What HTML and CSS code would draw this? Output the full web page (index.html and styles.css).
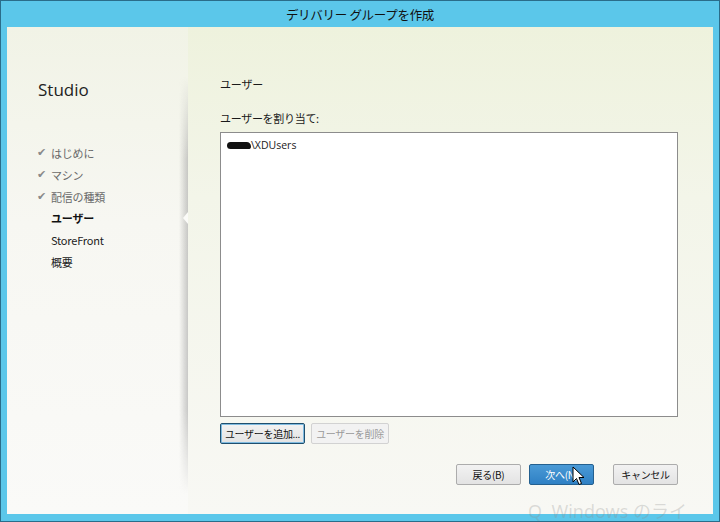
FILE: index.html
```html
<!DOCTYPE html>
<html lang="ja">
<head>
    <meta charset="UTF-8">
    <title>デリバリー グループを作成</title>
    <link rel="stylesheet" href="styles.css">
</head>
<body>

    <div class="window">
        <!-- Title bar -->
        <div class="title-bar">デリバリー グループを作成</div>

        <div class="content">
            <!-- Left steps -->
            <div class="sidebar">
                <div class="brand">Studio</div>
                <ul class="steps">
                    <li class="step done"><span class="check">✔</span>はじめに</li>
                    <li class="step done"><span class="check">✔</span>マシン</li>
                    <li class="step done"><span class="check">✔</span>配信の種類</li>
                    <li class="step active">ユーザー</li>
                    <li class="step">StoreFront</li>
                    <li class="step">概要</li>
                </ul>
                <div class="notch"></div>
            </div>

            <!-- Page -->
            <div class="main">
                <div class="heading">ユーザー</div>
                <div class="label">ユーザーを割り当て:</div>
                <div class="user-list">
                    <div class="user-row"><span class="blot"></span>\XDUsers</div>
                </div>
                <div class="list-buttons">
                    <button class="btn btn-add focused">ユーザーを追加...</button>
                    <button class="btn btn-remove" disabled>ユーザーを削除</button>
                </div>
                <div class="footer">
                    <button class="btn nav-btn">戻る(B)</button>
                    <button class="btn nav-btn primary">次へ(N)</button>
                    <button class="btn nav-btn cancel">キャンセル</button>
                </div>
            </div>
        </div>
    </div>

    <!-- mouse pointer over the Next button -->
    <svg class="cursor" width="13" height="20" viewBox="0 0 13 20">
        <path d="M1 1 L1 16 L4.5 12.5 L7 18.5 L9.5 17.5 L7 11.5 L12 11.5 Z" fill="#fff" stroke="#000" stroke-width="1"/>
    </svg>

    <!-- faded watermark at the bottom -->
    <div class="watermark">Q&nbsp;&nbsp;Windows のライ</div>

</body>
</html>
```

FILE: styles.css
```css
body {
    margin: 0;
    width: 720px;
    height: 522px;
    overflow: hidden;
    position: relative;
    font-family: "Noto Sans CJK JP", "Noto Sans", sans-serif;
    font-size: 11px;
    color: #1a1a1a;
}

.window {
    height: 522px;
    box-sizing: border-box;
    border: 1px solid #2a6d8a;
    background-color: #5bc7ea;
    padding: 0 6px 7px 6px;
    display: flex;
    flex-direction: column;
}

.title-bar {
    height: 26px;
    line-height: 28px;
    text-align: center;
    font-size: 12.5px;
    letter-spacing: -0.3px;
    color: #111;
}

.content {
    flex: 1;
    display: flex;
    background: linear-gradient(to bottom, #eef2dd 0%, #f3f5e9 35%, #f8f8f4 100%);
}

/* Left steps */
.sidebar {
    width: 181px;
    box-sizing: border-box;
    padding-left: 31px;
    position: relative;
    background: linear-gradient(to bottom, #f1f3e6 0%, #f7f7f2 40%, #fafaf8 100%);
}

.sidebar::after {
    content: '';
    position: absolute;
    right: 0;
    top: 50px;
    bottom: 20px;
    width: 9px;
    background: linear-gradient(to right, rgba(180, 180, 180, 0), rgba(160, 160, 160, 0.55));
    -webkit-mask-image: linear-gradient(to bottom, transparent 0%, #000 20%, #000 80%, transparent 100%);
}

.brand {
    margin-top: 51px;
    font-family: "Open Sans", "Noto Sans", sans-serif;
    font-size: 17px;
    line-height: 24px;
    color: #222;
}

.steps {
    list-style: none;
    margin: 40px 0 0 0;
    padding: 0;
}

.step {
    height: 21.8px;
    line-height: 22px;
    padding-left: 13px;
    position: relative;
    color: #222;
    letter-spacing: -0.2px;
}

.step.done {
    color: #6a6a6a;
}

.step.active {
    font-weight: bold;
    color: #111;
}

.check {
    position: absolute;
    left: -1px;
    color: #8a8a8a;
    font-size: 11px;
    font-family: "DejaVu Sans", sans-serif;
}

.notch {
    position: absolute;
    right: 0;
    top: 185px;
    width: 0;
    height: 0;
    border-top: 6px solid transparent;
    border-bottom: 6px solid transparent;
    border-right: 5px solid #fbfbf8;
    z-index: 1;
}

/* Page */
.main {
    flex: 1;
    padding: 49px 35px 0 32px;
    display: flex;
    flex-direction: column;
}

.heading {
    line-height: 16px;
    letter-spacing: -0.2px;
}

.label {
    margin-top: 18px;
    line-height: 16px;
    letter-spacing: -0.3px;
}

.user-list {
    margin-top: 6px;
    height: 285px;
    box-sizing: border-box;
    border: 1px solid #8c8c8c;
    background-color: #fff;
    padding: 4px 6px;
}

.user-row {
    line-height: 16px;
    font-family: "Open Sans", "Noto Sans", sans-serif;
    font-size: 10.5px;
    display: flex;
    align-items: center;
}

.blot {
    display: inline-block;
    width: 24px;
    height: 7px;
    background-color: #111;
    border-radius: 4px 5px 3px 4px;
}

.btn {
    height: 21px;
    box-sizing: border-box;
    font-family: "Noto Sans CJK JP", sans-serif;
    font-size: 10px;
    letter-spacing: -0.3px;
    white-space: nowrap;
    padding: 0;
    border: 1px solid #acacac;
    border-radius: 2px;
    background: linear-gradient(to bottom, #f2f2f2, #e3e3e3);
    color: #111;
}

.list-buttons {
    margin-top: 6px;
    display: flex;
    gap: 6px;
}

.btn-add {
    width: 85px;
}

.btn.focused {
    border: 1px solid #1f4f6e;
    box-shadow: inset 0 0 0 1px #7fbbe0;
}

.btn-remove {
    width: 78px;
    color: #9a9a9a;
    background: #f2f2f2;
    border-color: #d2d2d2;
}

.footer {
    margin-top: 20px;
    display: flex;
    justify-content: flex-end;
}

.nav-btn {
    width: 65px;
    margin-left: 8px;
}

.nav-btn.primary {
    background: linear-gradient(to bottom, #4a9ad6, #2f80c4);
    border-color: #24608f;
    color: #fff;
}

.nav-btn.cancel {
    margin-left: 19px;
}

.cursor {
    position: absolute;
    left: 572px;
    top: 466px;
}

.watermark {
    position: absolute;
    left: 528px;
    top: 501px;
    font-family: "Noto Sans", "Noto Sans CJK JP", sans-serif;
    font-size: 18px;
    line-height: 20px;
    white-space: nowrap;
    color: rgba(140, 140, 140, 0.28);
}
```
